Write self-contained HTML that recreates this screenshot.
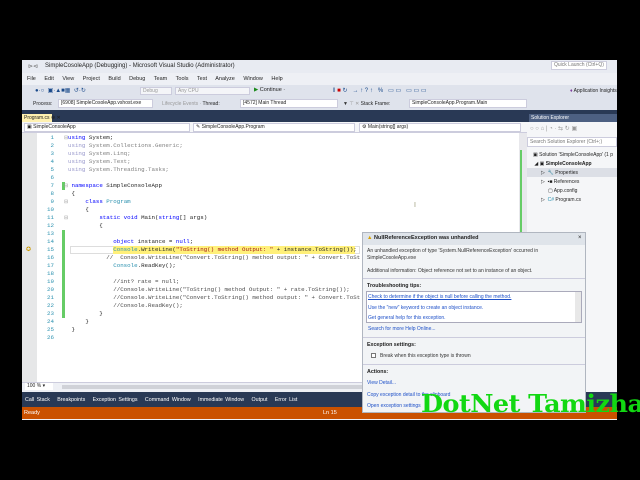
<!DOCTYPE html><html><head><style>
*{margin:0;padding:0;box-sizing:border-box}
body{width:640px;height:480px;background:#000;position:relative;overflow:hidden;font-family:"Liberation Sans",sans-serif;font-size:6px;color:#1e1e1e}
.a{position:absolute;white-space:nowrap}
.code{font-family:"Liberation Mono",monospace;font-size:5.8px;line-height:8px}
.kw{color:#0000ff}.ty{color:#2b91af}.gr{color:#808080}.cm{color:#4a4a4a}.st{color:#a31515}
.lnk{color:#1e50c8}
</style></head><body>
<div class="a" style="left:22px;top:60px;width:595px;height:360px;background:#eef0f5"></div>
<div class="a" style="left:22px;top:60px;width:595px;height:13px;background:#e8ebf2"></div>
<div class="a" style="left:28px;top:63px;font-size:6px;color:#666">⊳⊲</div>
<div class="a" style="left:45px;top:63px;font-size:6px">SimpleCosoleApp (Debugging) - Microsoft Visual Studio (Administrator)</div>
<div class="a" style="left:551px;top:61px;width:56px;height:9px;background:#fff;border:1px solid #ccd;font-size:5px;color:#777;padding-left:2px;line-height:7px">Quick Launch (Ctrl+Q)</div>
<div class="a" style="left:27px;top:76px;font-size:5.5px;word-spacing:7px">File Edit View Project Build Debug Team Tools Test Analyze Window Help</div>
<div class="a" style="left:22px;top:85px;width:595px;height:13px;background:#dfe3ec"></div>
<div class="a" style="left:35px;top:87px;font-size:6px;color:#1a4a8a">●·○ &nbsp;▣·▲■▦ &nbsp;↺·↻</div>
<div class="a" style="left:140px;top:87px;width:32px;height:8px;background:#f4f5f8;border:1px solid #ccd;font-size:5px;color:#999;line-height:6px;padding-left:2px">Debug</div>
<div class="a" style="left:175px;top:87px;width:75px;height:8px;background:#f4f5f8;border:1px solid #ccd;font-size:5px;color:#999;line-height:6px;padding-left:2px">Any CPU</div>
<div class="a" style="left:254px;top:87px;font-size:5.5px"><span style="color:#1a8a1a">▶</span> Continue ·</div>
<div class="a" style="left:333px;top:87px;font-size:6px;color:#1a4a8a">‖ <span style="color:#c00">■</span> ↻ &nbsp; → ↑ ? ↑ &nbsp; % &nbsp; ▭ ▭ &nbsp; ▭ ▭ ▭</div>
<div class="a" style="left:570px;top:88px;font-size:5px"><span style="color:#8040a0">♦</span> Application Insights</div>
<div class="a" style="left:22px;top:98px;width:595px;height:12px;background:#dfe3ec"></div>
<div class="a" style="left:33px;top:101px;font-size:5px">Process:</div>
<div class="a" style="left:58px;top:99px;width:95px;height:9px;background:#fff;border:1px solid #ccd;font-size:5px;line-height:7px;padding-left:2px">[6908] SimpleCosoleApp.vshost.exe</div>
<div class="a" style="left:162px;top:101px;font-size:5px;color:#999">Lifecycle Events · <span style="color:#1e1e1e">Thread:</span></div>
<div class="a" style="left:240px;top:99px;width:98px;height:9px;background:#fff;border:1px solid #ccd;font-size:5px;line-height:7px;padding-left:2px">[4572] Main Thread</div>
<div class="a" style="left:343px;top:101px;font-size:5px"><span style="color:#333">▼</span> <span style="color:#999">⊤ ✕</span> Stack Frame:</div>
<div class="a" style="left:409px;top:99px;width:118px;height:9px;background:#fff;border:1px solid #ccd;font-size:5px;line-height:7px;padding-left:2px">SimpleConsoleApp.Program.Main</div>
<div class="a" style="left:22px;top:110px;width:505px;height:12px;background:#293955"></div>
<div class="a" style="left:22px;top:114px;width:30px;height:8px;background:#fff1b0;font-size:5px;line-height:8px;padding-left:2px">Program.cs ⊕ ✕</div>
<div class="a" style="left:527px;top:110px;width:90px;height:12px;background:#293955"></div>
<div class="a" style="left:529px;top:114px;width:88px;height:8px;background:#4d6082;color:#fff;font-size:5px;line-height:8px;padding-left:2px">Solution Explorer</div>
<div class="a" style="left:22px;top:122px;width:505px;height:11px;background:#f5f6f8;border-bottom:1px solid #ccd"></div>
<div class="a" style="left:24px;top:123px;width:166px;height:9px;background:#fff;border:1px solid #ccd;font-size:5px;line-height:7px;padding-left:2px">▣ SimpleConsoleApp</div>
<div class="a" style="left:193px;top:123px;width:162px;height:9px;background:#fff;border:1px solid #ccd;font-size:5px;line-height:7px;padding-left:2px">✎ SimpleConsoleApp.Program</div>
<div class="a" style="left:359px;top:123px;width:162px;height:9px;background:#fff;border:1px solid #ccd;font-size:5px;line-height:7px;padding-left:2px">⚙ Main(string[] args)</div>
<div class="a" style="left:22px;top:133px;width:500px;height:249px;background:#fff"></div>
<div class="a" style="left:22px;top:133px;width:15px;height:249px;background:#e6e7e8"></div>
<div class="a" style="left:519px;top:133px;width:8px;height:249px;background:#e8e8ec"></div>
<div class="a" style="left:520px;top:150px;width:2px;height:160px;background:#6c6"></div>
<div class="a" style="left:62px;top:182px;width:3px;height:8px;background:#6c6"></div>
<div class="a" style="left:62px;top:230px;width:3px;height:88px;background:#6c6"></div>
<div class="a" style="left:70px;top:246px;width:290px;height:8px;border:1px solid #ddd"></div>
<div class="a" style="left:113px;top:246px;width:242px;height:8px;background:#fff07a"></div>
<div class="a" style="left:26px;top:246px;color:#c90;font-size:6px">✪</div>
<div class="a code" style="left:44px;top:134px;color:#2b91af;text-align:right;width:10px">1<br>2<br>3<br>4<br>5<br>6<br>7<br>8<br>9<br>10<br>11<br>12<br>13<br>14<br>15<br>16<br>17<br>18<br>19<br>20<br>21<br>22<br>23<br>24<br>25<br>26</div>
<div class="a code" style="left:64px;top:134px;color:#999;font-size:5px;line-height:8px">⊟<br><br><br><br><br><br>⊟<br><br>⊟<br><br>⊟</div>
<div class="a code" style="left:68px;top:134px"><span class="kw">using</span> System;
<br><span class="gr"><span style="color:#99c">using</span> System.Collections.Generic;</span>
<br><span class="gr"><span style="color:#99c">using</span> System.Linq;</span>
<br><span class="gr"><span style="color:#99c">using</span> System.Text;</span>
<br><span class="gr"><span style="color:#99c">using</span> System.Threading.Tasks;</span>
<br>
<br>&nbsp;<span class="kw">namespace</span> SimpleConsoleApp
<br>&nbsp;{
<br>&nbsp;&nbsp;&nbsp;&nbsp;&nbsp;<span class="kw">class</span> <span class="ty">Program</span>
<br>&nbsp;&nbsp;&nbsp;&nbsp;&nbsp;{
<br>&nbsp;&nbsp;&nbsp;&nbsp;&nbsp;&nbsp;&nbsp;&nbsp;&nbsp;<span class="kw">static void</span> Main(<span class="kw">string</span>[] args)
<br>&nbsp;&nbsp;&nbsp;&nbsp;&nbsp;&nbsp;&nbsp;&nbsp;&nbsp;{
<br>
<br>&nbsp;&nbsp;&nbsp;&nbsp;&nbsp;&nbsp;&nbsp;&nbsp;&nbsp;&nbsp;&nbsp;&nbsp;&nbsp;<span class="kw">object</span> instance = <span class="kw">null</span>;
<br>&nbsp;&nbsp;&nbsp;&nbsp;&nbsp;&nbsp;&nbsp;&nbsp;&nbsp;&nbsp;&nbsp;&nbsp;&nbsp;<span class="ty">Console</span>.WriteLine(<span class="st">"ToString() method Output: "</span> + instance.ToString());
<br>&nbsp;&nbsp;&nbsp;&nbsp;&nbsp;&nbsp;&nbsp;&nbsp;&nbsp;&nbsp;&nbsp;<span class="cm">//&nbsp; Console.WriteLine("Convert.ToString() method output: " + Convert.ToSt</span>
<br>&nbsp;&nbsp;&nbsp;&nbsp;&nbsp;&nbsp;&nbsp;&nbsp;&nbsp;&nbsp;&nbsp;&nbsp;&nbsp;<span class="ty">Console</span>.ReadKey();
<br>
<br>&nbsp;&nbsp;&nbsp;&nbsp;&nbsp;&nbsp;&nbsp;&nbsp;&nbsp;&nbsp;&nbsp;&nbsp;&nbsp;<span class="cm">//int? rate = null;</span>
<br>&nbsp;&nbsp;&nbsp;&nbsp;&nbsp;&nbsp;&nbsp;&nbsp;&nbsp;&nbsp;&nbsp;&nbsp;&nbsp;<span class="cm">//Console.WriteLine("ToString() method Output: " + rate.ToString());</span>
<br>&nbsp;&nbsp;&nbsp;&nbsp;&nbsp;&nbsp;&nbsp;&nbsp;&nbsp;&nbsp;&nbsp;&nbsp;&nbsp;<span class="cm">//Console.WriteLine("Convert.ToString() method output: " + Convert.ToSt</span>
<br>&nbsp;&nbsp;&nbsp;&nbsp;&nbsp;&nbsp;&nbsp;&nbsp;&nbsp;&nbsp;&nbsp;&nbsp;&nbsp;<span class="cm">//Console.ReadKey();</span>
<br>&nbsp;&nbsp;&nbsp;&nbsp;&nbsp;&nbsp;&nbsp;&nbsp;&nbsp;}
<br>&nbsp;&nbsp;&nbsp;&nbsp;&nbsp;}
<br>&nbsp;}</div>
<div class="a" style="left:414px;top:202px;color:#997;font-size:7px">I</div>
<div class="a" style="left:22px;top:382px;width:500px;height:10px;background:#eef0f5;border-top:1px solid #ccd"></div>
<div class="a" style="left:25px;top:383px;width:28px;height:7px;background:#fff;font-size:5px;line-height:7px;padding-left:2px">100 % ▾</div>
<div class="a" style="left:62px;top:385px;width:455px;height:4px;background:#d0d2d8"></div>
<div class="a" style="left:527px;top:122px;width:90px;height:270px;background:#f5f6f8"></div>
<div class="a" style="left:530px;top:125px;font-size:6px;color:#999">○ ○ ⌂ | ◔ · ⇆ ↻ ▣</div>
<div class="a" style="left:527px;top:137px;width:90px;height:10px;background:#fff;border:1px solid #ccd;font-size:5px;color:#777;line-height:8px;padding-left:2px">Search Solution Explorer (Ctrl+;)</div>
<div class="a" style="left:533px;top:151px;font-size:5px;line-height:9px">▣ Solution 'SimpleConsoleApp' (1 p<br>&nbsp;◢ ▣ <b>SimpleConsoleApp</b></div>
<div class="a" style="left:527px;top:168px;width:90px;height:9px;background:#dcdfe6"></div>
<div class="a" style="left:541px;top:169px;font-size:5px;line-height:9px">▷ &nbsp;🔧 Properties<br>▷ &nbsp;▪■ References<br>&nbsp;&nbsp;&nbsp;&nbsp;&nbsp;▢ App.config<br>▷ &nbsp;<span class="ty">C#</span> Program.cs</div>
<div class="a" style="left:22px;top:392px;width:595px;height:15px;background:#293955"></div>
<div class="a" style="left:25px;top:397px;color:#fff;font-size:5.3px;word-spacing:1px">Call Stack &nbsp; Breakpoints &nbsp; Exception Settings &nbsp; Command Window &nbsp; Immediate Window &nbsp; Output &nbsp; Error List</div>
<div class="a" style="left:22px;top:407px;width:595px;height:12px;background:#ca5100"></div>
<div class="a" style="left:24px;top:410px;color:#fff;font-size:5.5px">Ready</div>
<div class="a" style="left:323px;top:410px;color:#fff;font-size:5.5px">Ln 15</div>
<div class="a" style="left:362px;top:232px;width:224px;height:181px;background:#f2f4f6;border:1px solid #b0b6c0"></div>
<div class="a" style="left:363px;top:233px;width:222px;height:12px;background:#dfe4ea"></div>
<div class="a" style="left:367px;top:235px;font-size:5.5px"><span style="color:#d8a000">▲</span> <b>NullReferenceException was unhandled</b></div>
<div class="a" style="left:578px;top:235px;font-size:6px">×</div>
<div class="a" style="left:367px;top:248px;font-size:5px;line-height:6.5px;color:#333">An unhandled exception of type 'System.NullReferenceException' occurred in<br>SimpleCosoleApp.exe<br><br>Additional information: Object reference not set to an instance of an object.</div>
<div class="a" style="left:363px;top:278px;width:222px;height:1px;background:#ccd"></div>
<div class="a" style="left:367px;top:283px;font-size:5.3px"><b>Troubleshooting tips:</b></div>
<div class="a" style="left:366px;top:291px;width:216px;height:32px;background:#fff;border:1px solid #aab"></div>
<div class="a" style="left:575px;top:292px;width:6px;height:30px;background:#e8e8e8"></div>
<div class="a lnk" style="left:368px;top:292px;font-size:5px;line-height:10.5px"><u>Check to determine if the object is null before calling the method.</u><br>Use the "new" keyword to create an object instance.<br>Get general help for this exception.</div>
<div class="a lnk" style="left:368px;top:326px;font-size:5px">Search for more Help Online...</div>
<div class="a" style="left:363px;top:337px;width:222px;height:1px;background:#ccd"></div>
<div class="a" style="left:367px;top:342px;font-size:5.3px"><b>Exception settings:</b></div>
<div class="a" style="left:371px;top:353px;width:5px;height:5px;border:1px solid #777;background:#fff"></div>
<div class="a" style="left:380px;top:353px;font-size:5px;color:#333">Break when this exception type is thrown</div>
<div class="a" style="left:363px;top:364px;width:222px;height:1px;background:#ccd"></div>
<div class="a" style="left:367px;top:369px;font-size:5.3px"><b>Actions:</b></div>
<div class="a lnk" style="left:367px;top:378px;font-size:5px;line-height:11.5px">View Detail...<br>Copy exception detail to the clipboard<br>Open exception settings</div>
<div class="a" style="left:421px;top:389px;font-family:'DejaVu Serif','Liberation Serif',serif;font-weight:bold;font-size:24px;color:#12d812;letter-spacing:-0.5px;transform:scaleX(1.06);transform-origin:left top">DotNet Tamizha</div>
</body></html>
